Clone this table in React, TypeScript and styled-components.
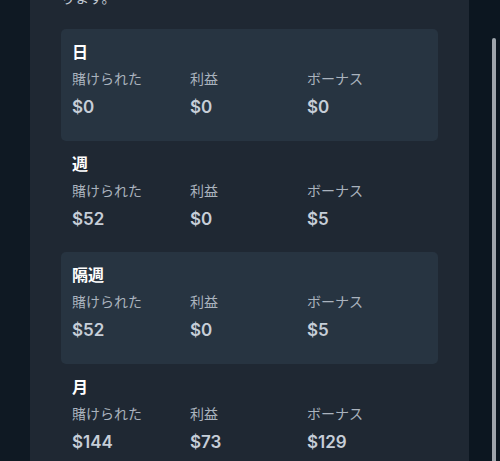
import React from 'react';
import styled, { createGlobalStyle } from 'styled-components';

const GlobalStyle = createGlobalStyle`
  html, body {
    margin: 0;
    padding: 0;
    background-color: #0c1620;
  }
  body {
    font-family: Inter, 'Noto Sans CJK JP', sans-serif;
  }
`;

const Page = styled.div`
  position: relative;
  width: 500px;
  height: 461px;
  overflow: hidden;
  display: flex;
  background-color: #0c1620;
`;

const LeftGutter = styled.div`
  width: 30px;
  flex-shrink: 0;
  background-color: #0f1923;
`;

const Panel = styled.section`
  width: 439px;
  flex-shrink: 0;
  padding: 0 31px;
  box-sizing: border-box;
  background-color: #1f2833;
`;

// the panel is scrolled: only the foot of the intro's last line shows
const Intro = styled.p`
  margin: -13px 0 0;
  font-size: 14px;
  line-height: 22px;
  color: #c3cad3;
`;

const List = styled.div`
  display: flex;
  flex-direction: column;
  margin-top: 20px;
`;

const Period = styled.div<{ $shaded: boolean }>`
  height: 111.5px;
  padding: 12px 11px 0;
  box-sizing: border-box;
  border-radius: 5px;
  background-color: ${({ $shaded }) => ($shaded ? '#273441' : 'transparent')};
`;

const PeriodTitle = styled.h3`
  margin: 0;
  font-size: 16px;
  line-height: 22px;
  font-weight: 700;
  color: #ffffff;
`;

const Stats = styled.div`
  display: grid;
  grid-template-columns: 118px 117px 1fr;
  margin-top: 6px;
`;

const Stat = styled.div`
  display: flex;
  flex-direction: column;
  gap: 6px;
`;

const StatLabel = styled.span`
  font-size: 14px;
  line-height: 20px;
  color: #aab3be;
`;

const StatValue = styled.span`
  font-size: 17px;
  line-height: 24px;
  font-weight: 600;
  color: #c6ced8;
`;

const ScrollThumb = styled.div`
  position: absolute;
  top: 38px;
  right: 4px;
  width: 4px;
  height: 440px;
  border-radius: 2px;
  background-color: #9ea4ab;
`;

const periods = [
  { title: '日', wagered: '$0', profit: '$0', bonus: '$0' },
  { title: '週', wagered: '$52', profit: '$0', bonus: '$5' },
  { title: '隔週', wagered: '$52', profit: '$0', bonus: '$5' },
  { title: '月', wagered: '$144', profit: '$73', bonus: '$129' },
];

const App: React.FC = () => {
  return (
    <>
      <GlobalStyle />
      <Page>
        <LeftGutter />
        <Panel>
          <Intro>ります。</Intro>
          <List>
            {periods.map((period, index) => (
              <Period key={period.title} $shaded={index % 2 === 0}>
                <PeriodTitle>{period.title}</PeriodTitle>
                <Stats>
                  <Stat>
                    <StatLabel>賭けられた</StatLabel>
                    <StatValue>{period.wagered}</StatValue>
                  </Stat>
                  <Stat>
                    <StatLabel>利益</StatLabel>
                    <StatValue>{period.profit}</StatValue>
                  </Stat>
                  <Stat>
                    <StatLabel>ボーナス</StatLabel>
                    <StatValue>{period.bonus}</StatValue>
                  </Stat>
                </Stats>
              </Period>
            ))}
          </List>
        </Panel>
        <ScrollThumb />
      </Page>
    </>
  );
};

export default App;
